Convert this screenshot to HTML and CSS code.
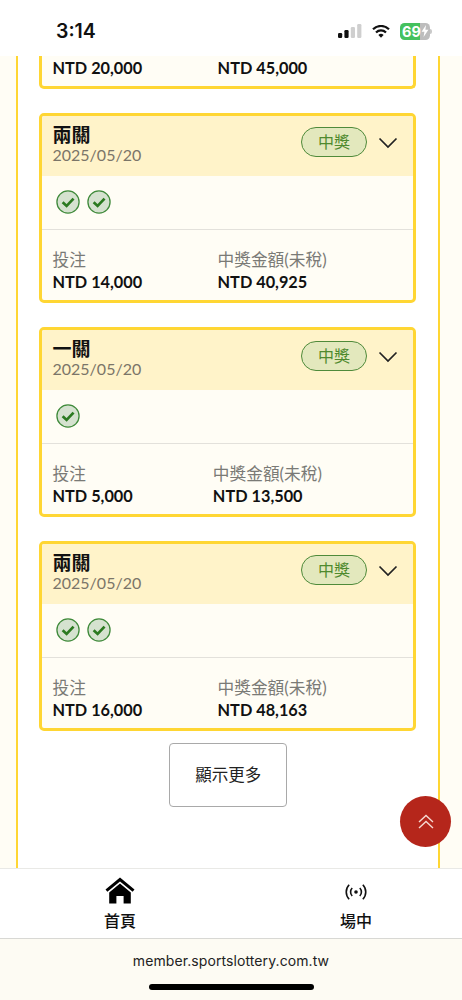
FILE: index.html
```html
<!DOCTYPE html>
<html lang="zh-Hant">
<head>
<meta charset="utf-8">
<title>member.sportslottery.com.tw</title>
<link rel="stylesheet" href="styles.css">
</head>
<body>
<div class="phone">
  <header class="status">
    <span class="time">3:14</span>
    <div class="status-icons">
      <svg class="signal" width="24" height="14" viewBox="0 0 24 14"><rect x="0" y="9" width="4.2" height="5" rx="1.2" fill="#111"/><rect x="6.4" y="6" width="4.2" height="8" rx="1.2" fill="#111"/><rect x="12.8" y="3" width="4.2" height="11" rx="1.2" fill="#cfcfcf"/><rect x="19.2" y="0" width="4.2" height="14" rx="1.2" fill="#cfcfcf"/></svg>
      <svg class="wifi" width="18" height="13" viewBox="0 0 18 13"><path d="M1 4.2 A11.5 11.5 0 0 1 17 4.2" fill="none" stroke="#111" stroke-width="2.2"/><path d="M4 7.4 A7 7 0 0 1 14 7.4" fill="none" stroke="#111" stroke-width="2.2"/><path d="M6.4 10 A3.6 3.6 0 0 1 11.6 10 L9 12.8 Z" fill="#111"/></svg>
      <div class="battery"><span class="battery-num">69</span><svg class="bolt" width="8" height="12" viewBox="0 0 8 12"><path d="M5 0 L0.6 6.8 H3.4 L2.6 12 L7.4 4.8 H4.4 Z" fill="#fff"/></svg><i class="battery-cap"></i></div>
    </div>
  </header>

  <main class="main">
    <div class="panel">
      <section class="card card-clipped">
        <div class="amounts amounts-clipped">
          <div class="col"><b class="value">NTD 20,000</b></div>
          <div class="col col-wide"><b class="value">NTD 45,000</b></div>
          <div class="col"></div>
        </div>
      </section>

      <section class="card">
        <div class="card-head">
          <div><h2 class="title">兩關</h2><div class="date">2025/05/20</div></div>
          <div class="head-right"><span class="pill">中獎</span><svg class="chev" width="20" height="12" viewBox="0 0 20 12"><path d="M1.5 1.5 L10 10 L18.5 1.5" fill="none" stroke="#222" stroke-width="1.7"/></svg></div>
        </div>
        <div class="checks">
          <svg class="check" width="24" height="24" viewBox="0 0 26 26"><circle cx="13" cy="13" r="12" fill="#d5e2cf" stroke="#3f8a3a" stroke-width="1.4"/><path d="M7.2 13.2 L11.5 17.3 L19 9.4" fill="none" stroke="#2b7a20" stroke-width="2.9"/></svg>
          <svg class="check" width="24" height="24" viewBox="0 0 26 26"><circle cx="13" cy="13" r="12" fill="#d5e2cf" stroke="#3f8a3a" stroke-width="1.4"/><path d="M7.2 13.2 L11.5 17.3 L19 9.4" fill="none" stroke="#2b7a20" stroke-width="2.9"/></svg>
        </div>
        <div class="amounts">
          <div class="col"><span class="label">投注</span><b class="value">NTD 14,000</b></div>
          <div class="col"><span class="label">中獎金額(未稅)</span><b class="value">NTD 40,925</b></div>
          <div class="col"></div>
        </div>
      </section>

      <section class="card">
        <div class="card-head">
          <div><h2 class="title">一關</h2><div class="date">2025/05/20</div></div>
          <div class="head-right"><span class="pill">中獎</span><svg class="chev" width="20" height="12" viewBox="0 0 20 12"><path d="M1.5 1.5 L10 10 L18.5 1.5" fill="none" stroke="#222" stroke-width="1.7"/></svg></div>
        </div>
        <div class="checks">
          <svg class="check" width="24" height="24" viewBox="0 0 26 26"><circle cx="13" cy="13" r="12" fill="#d5e2cf" stroke="#3f8a3a" stroke-width="1.4"/><path d="M7.2 13.2 L11.5 17.3 L19 9.4" fill="none" stroke="#2b7a20" stroke-width="2.9"/></svg>
        </div>
        <div class="amounts">
          <div class="col"><span class="label">投注</span><b class="value">NTD 5,000</b></div>
          <div class="col"><span class="label">中獎金額(未稅)</span><b class="value">NTD 13,500</b></div>
          <div class="col"></div>
        </div>
      </section>

      <section class="card">
        <div class="card-head">
          <div><h2 class="title">兩關</h2><div class="date">2025/05/20</div></div>
          <div class="head-right"><span class="pill">中獎</span><svg class="chev" width="20" height="12" viewBox="0 0 20 12"><path d="M1.5 1.5 L10 10 L18.5 1.5" fill="none" stroke="#222" stroke-width="1.7"/></svg></div>
        </div>
        <div class="checks">
          <svg class="check" width="24" height="24" viewBox="0 0 26 26"><circle cx="13" cy="13" r="12" fill="#d5e2cf" stroke="#3f8a3a" stroke-width="1.4"/><path d="M7.2 13.2 L11.5 17.3 L19 9.4" fill="none" stroke="#2b7a20" stroke-width="2.9"/></svg>
          <svg class="check" width="24" height="24" viewBox="0 0 26 26"><circle cx="13" cy="13" r="12" fill="#d5e2cf" stroke="#3f8a3a" stroke-width="1.4"/><path d="M7.2 13.2 L11.5 17.3 L19 9.4" fill="none" stroke="#2b7a20" stroke-width="2.9"/></svg>
        </div>
        <div class="amounts">
          <div class="col"><span class="label">投注</span><b class="value">NTD 16,000</b></div>
          <div class="col"><span class="label">中獎金額(未稅)</span><b class="value">NTD 48,163</b></div>
          <div class="col"></div>
        </div>
      </section>

      <button class="more" type="button"><span class="more-text">顯示更多</span></button>
    </div>
    <button class="to-top" type="button" aria-label="top">
      <svg width="18" height="18" viewBox="0 0 18 18"><path d="M2 9 L9 2.5 L16 9 M2 15 L9 8.5 L16 15" fill="none" stroke="#f6d9d2" stroke-width="1.4"/></svg>
    </button>
  </main>

  <nav class="nav">
    <a class="nav-item">
      <svg width="30" height="27" viewBox="0 0 30 27"><path d="M15 0.5 L0.5 12.5 L2.4 14.8 L15 4.4 L27.6 14.8 L29.5 12.5 Z" fill="#000"/><path d="M15 6.6 L4.2 15.4 V26.5 H11.4 V19 H18.6 V26.5 H25.8 V15.4 Z" fill="#000"/></svg>
      <span>首頁</span>
    </a>
    <a class="nav-item">
      <svg class="live" width="22" height="18" viewBox="0 0 24 20"><circle cx="12" cy="10" r="2" fill="#111"/><path d="M7.8 5.5 A6.5 6.5 0 0 0 7.8 14.5 M16.2 5.5 A6.5 6.5 0 0 1 16.2 14.5 M4.4 2 A11.5 11.5 0 0 0 4.4 18 M19.6 2 A11.5 11.5 0 0 1 19.6 18" fill="none" stroke="#111" stroke-width="1.8"/></svg>
      <span>場中</span>
    </a>
  </nav>

  <footer class="browser">
    <span class="url">member.sportslottery.com.tw</span>
    <i class="home-bar"></i>
  </footer>
</div>
</body>
</html>
```

FILE: styles.css
```css
* { box-sizing: border-box; }
html, body { margin: 0; padding: 0; }
body { font-family: "Lato", "Noto Sans CJK TC", sans-serif; background: #fffdf5; color: #111; }

.phone { width: 462px; height: 1000px; display: flex; flex-direction: column; overflow: hidden; }

.status { height: 56px; flex: none; background: #fff; display: flex; justify-content: space-between; align-items: center; padding: 6px 32px 0 56px; }
.time { font-family: "Inter", "Liberation Sans", sans-serif; font-weight: 600; font-size: 19.5px; color: #111; }
.status-icons { display: flex; align-items: center; gap: 10px; }
.signal { margin-right: 0; }
.battery { position: relative; width: 30px; height: 17px; border-radius: 4.5px; background: linear-gradient(90deg, #45c15e 0 68%, #bdbdbd 68% 100%); display: flex; align-items: center; padding-left: 2px; }
.battery-num { font-family: "Inter", "Liberation Sans", sans-serif; font-weight: 700; font-size: 14.5px; color: #fff; line-height: 17px; }
.bolt { margin-left: 0; flex: none; }
.battery-cap { position: absolute; right: -2px; top: 6px; width: 2px; height: 5px; background: #c9c9c9; border-radius: 0 2px 2px 0; }

.main { position: relative; height: 812px; flex: none; overflow: hidden; padding: 0 22px 0 16px; }
.panel { height: 100%; background: #fff; border-left: 2.5px solid #ffd633; border-right: 2.5px solid #ffd633; padding: 0 22px 0 20.5px; display: flex; flex-direction: column; align-items: stretch; gap: 24px; }

.card { border: 3px solid #ffd633; border-radius: 5px; background: #fffdf5; height: 190px; flex: none; overflow: hidden; }
.card-clipped { height: 33px; border-top: 0; border-radius: 0 0 5px 5px; }

.card-head { height: 60px; background: #fff3c9; padding: 0 15px 0 11px; display: flex; justify-content: space-between; align-items: flex-start; }
.title { margin: 8px 0 0; font-size: 19px; line-height: 22px; font-weight: 700; color: #111; }
.date { font-size: 16px; line-height: 18px; color: #7b7568; margin-top: 0; }
.head-right { display: flex; align-items: center; gap: 11px; margin-top: 11px; }
.pill { width: 66px; height: 30px; border: 1.6px solid #4f8a3a; border-radius: 15px; background: #e3e8bd; color: #4f8a2e; font-size: 16px; line-height: 28px; text-align: center; }
.chev { margin-top: 2px; }

.checks { height: 54px; display: flex; align-items: center; gap: 7px; padding: 0 0 1px 14.5px; border-bottom: 1px solid #e3e1db; }

.amounts { display: flex; justify-content: space-between; padding: 19px 11px 0; }
.amounts-clipped { padding-top: 1px; }
.col { display: flex; flex-direction: column; }
.col-wide { min-width: 109px; }
.label { font-size: 16.7px; line-height: 22px; color: #7a7a76; white-space: nowrap; }
.value { font-size: 16.3px; line-height: 22px; font-weight: 700; color: #111; white-space: nowrap; }

.more { align-self: center; flex: none; margin: -12px 0 0 2px; width: 118px; height: 64px; background: #fff; border: 1px solid #a9a9a9; border-radius: 4px; font-family: "Noto Sans CJK TC", sans-serif; font-size: 16.5px; color: #222; padding: 0 0 2px; }

.to-top { position: absolute; left: 400px; top: 740px; width: 51px; height: 51px; border: 0; border-radius: 50%; background: #b5261b; display: flex; align-items: center; justify-content: center; padding: 0; }

.nav { height: 71px; flex: none; background: #fff; border-top: 1px solid #e9e9e6; border-bottom: 1px solid #d8d8d4; display: grid; grid-template-columns: 236px 236px; padding-left: 2px; overflow: hidden; }
.nav-item { display: flex; flex-direction: column; align-items: center; justify-content: flex-end; padding-bottom: 7px; font-family: "Noto Sans CJK TC", sans-serif; font-size: 16px; line-height: 22px; font-weight: 500; color: #111; }
.nav-item svg { margin-bottom: 5px; }
.nav-item .live { margin-bottom: 8px; }

.browser { flex: 1; background: #fdfbf3; display: flex; flex-direction: column; align-items: center; }
.url { font-family: "Inter", "Liberation Sans", sans-serif; font-size: 14px; line-height: 18px; margin-top: 13px; color: #222; letter-spacing: 0.09px; }
.home-bar { display: block; width: 165px; height: 6px; border-radius: 3px; background: #000; margin-top: 14px; }
```
